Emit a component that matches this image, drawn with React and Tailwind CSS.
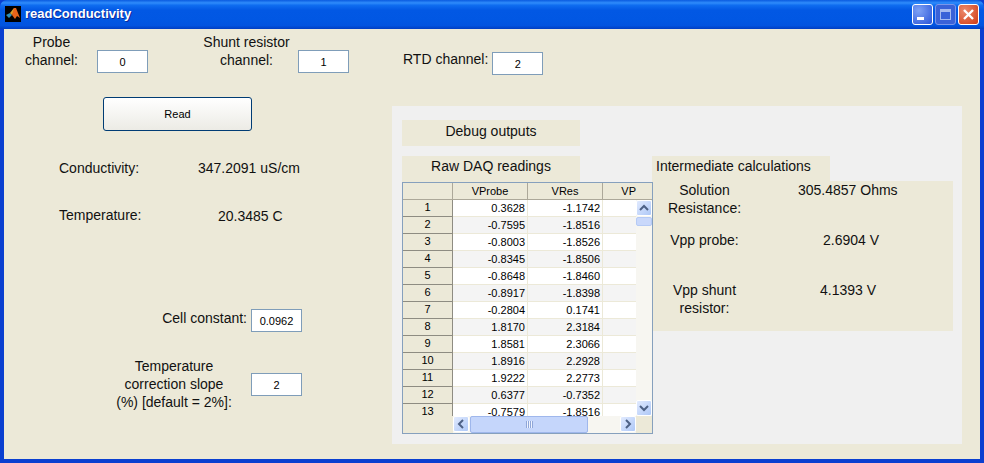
import React from "react";

const rows = [
  ["1", "0.3628", "-1.1742"],
  ["2", "-0.7595", "-1.8516"],
  ["3", "-0.8003", "-1.8526"],
  ["4", "-0.8345", "-1.8506"],
  ["5", "-0.8648", "-1.8460"],
  ["6", "-0.8917", "-1.8398"],
  ["7", "-0.2804", "0.1741"],
  ["8", "1.8170", "2.3184"],
  ["9", "1.8581", "2.3066"],
  ["10", "1.8916", "2.2928"],
  ["11", "1.9222", "2.2773"],
  ["12", "0.6377", "-0.7352"],
  ["13", "-0.7579", "-1.8516"],
];

function Edit({ value, className = "" }) {
  return (
    <div className={`w-[51px] h-[23px] shrink-0 bg-white border border-[#7f9db9] flex items-center justify-center text-[11px] text-black ${className}`}>
      {value}
    </div>
  );
}

function Chevron({ dir }) {
  const d = {
    up: "M3 9 L7 5 L11 9",
    down: "M3 5 L7 9 L11 5",
    left: "M9 3 L5 7 L9 11",
    right: "M5 3 L9 7 L5 11",
  }[dir];
  return (
    <svg width="14" height="14" viewBox="0 0 14 14" fill="none">
      <path d={d} stroke="#4d6185" strokeWidth="2" />
    </svg>
  );
}

function ScrollBtn({ dir }) {
  return (
    <div className="w-4 h-4 shrink-0 rounded-[2px] border border-white bg-gradient-to-br from-[#e1eafe] to-[#aec8f7] flex items-center justify-center">
      <Chevron dir={dir} />
    </div>
  );
}

function Table() {
  return (
    <div className="w-[251px] h-[252px] border border-[#86a0bd] bg-[#f0f0f0] flex flex-col overflow-hidden text-[11px] text-black">
      <div className="flex h-[17px] shrink-0 bg-[#ece9d8] border-b border-[#aca899]">
        <div className="w-[50px] border-r border-[#aca899]" />
        <div className="w-[75px] border-r border-[#aca899] text-center leading-[17px]">VProbe</div>
        <div className="w-[75px] border-r border-[#aca899] text-center leading-[17px]">VRes</div>
        <div className="w-[33px] text-right leading-[17px] overflow-hidden">VP</div>
      </div>
      <div className="flex h-[216px] shrink-0">
        <div className="w-[233px] overflow-hidden">
          {rows.map((r, i) => (
            <div key={r[0]} className="flex h-[17px] shrink-0">
              <div className="w-[50px] bg-[#ece9d8] border-r border-b border-[#8e8c82] text-center leading-[14px]">{r[0]}</div>
              <div className={`w-[75px] border-r border-b border-[#ece9d8] text-right pr-[2px] leading-[17px] ${i % 2 ? "bg-[#f4f4f4]" : "bg-white"}`}>{r[1]}</div>
              <div className={`w-[75px] border-r border-b border-[#ece9d8] text-right pr-[2px] leading-[17px] ${i % 2 ? "bg-[#f4f4f4]" : "bg-white"}`}>{r[2]}</div>
              <div className={`w-[33px] border-b border-[#ece9d8] ${i % 2 ? "bg-[#f4f4f4]" : "bg-white"}`} />
            </div>
          ))}
        </div>
        <div className="w-[16px] bg-[#f7f6f1] flex flex-col">
          <ScrollBtn dir="up" />
          <div className="h-[9px] mt-px rounded-[2px] border border-[#b5caf5] bg-[#c9d8fb]" />
          <div className="flex-1" />
          <ScrollBtn dir="down" />
        </div>
      </div>
      <div className="flex h-[17px] shrink-0 bg-[#ece9d8]">
        <div className="w-[50px]" />
        <div className="w-[183px] flex bg-[#f7f6f1]">
          <ScrollBtn dir="left" />
          <div className="w-[118px] ml-px rounded-[2px] border border-[#9fb7ec] bg-[#c5d6fb] flex items-center justify-center">
            <div className="w-[7px] h-[7px] bg-[repeating-linear-gradient(90deg,#8fa6d8_0,#8fa6d8_1px,#eef3ff_1px,#eef3ff_2px)]" />
          </div>
          <div className="flex-1" />
          <ScrollBtn dir="right" />
        </div>
      </div>
    </div>
  );
}

function TitleBar() {
  return (
    <div className="h-[29px] shrink-0 rounded-t-[7px] bg-[linear-gradient(180deg,#0a5be0_0%,#2f8cfb_10%,#0f6df0_18%,#0258e4_35%,#0157e3_70%,#0254e0_88%,#013ec2_100%)] flex items-center pl-[5px] pr-[5px]">
      <svg width="16" height="16" viewBox="0 0 16 16" className="shrink-0 mb-[1px]">
        <rect width="16" height="16" fill="#000" />
        <path d="M1 9 L5 7 L7 9 L4 12 Z" fill="#2f8fb8" />
        <path d="M5 7 L9 2 L11 3 L7 9 Z" fill="#d9a02c" />
        <path d="M9 2 L11 2 L15 12 L12 10 L10 13 L7 9 Z" fill="#e8641b" />
      </svg>
      <span className="ml-1 text-white text-[13px] font-bold font-['Liberation_Sans',sans-serif] [text-shadow:1px_1px_0_#0f2a9a] mb-[1px]">readConductivity</span>
      <div className="ml-auto flex gap-[2px]">
        <div className="w-[21px] h-[21px] rounded-[3px] border border-white bg-[radial-gradient(circle_at_30%_30%,#7ea2f5,#2a55d8)] flex items-end pl-[4px] pb-[4px]">
          <div className="w-[7px] h-[3px] bg-white" />
        </div>
        <div className="w-[21px] h-[21px] rounded-[3px] border border-[#7a96ea] bg-[#3a62d8] flex items-center justify-center">
          <div className="w-[11px] h-[11px] border border-[#a6baf0] border-t-[3px]" />
        </div>
        <div className="w-[21px] h-[21px] rounded-[3px] border border-white bg-[radial-gradient(circle_at_30%_30%,#ec8a6c,#cf3a14)] flex items-center justify-center">
          <svg width="13" height="13" viewBox="0 0 13 13">
            <path d="M2 2 L11 11 M11 2 L2 11" stroke="#fff" strokeWidth="2.4" />
          </svg>
        </div>
      </div>
    </div>
  );
}

export default function App() {
  return (
    <div className="w-[984px] h-[463px] overflow-hidden flex flex-col bg-[#0a3fd0] font-['Liberation_Sans',Arial,sans-serif] text-[14px] leading-[18px] text-[#111]">
      <TitleBar />
      <div className="flex-1 min-h-0 mx-[4px] mb-[4px] bg-[#ece9d8] flex flex-col">
        {/* top controls */}
        <div className="h-[68px] shrink-0 flex items-start">
          <div className="w-[93px] ml-0 mt-[4px] text-center pl-[2px]">Probe<br />channel:</div>
          <Edit value="0" className="mt-[21px]" />
          <div className="w-[95px] ml-[51px] mt-[4px] text-center">Shunt resistor<br />channel:</div>
          <Edit value="1" className="mt-[21px] ml-[4px]" />
          <div className="ml-[54px] mt-[21px]">RTD channel:</div>
          <Edit value="2" className="mt-[23px] ml-[4px]" />
        </div>

        <div className="flex-1 min-h-0 flex">
          {/* left column */}
          <div className="w-[388px] shrink-0 flex flex-col">
            <button className="ml-[99px] w-[149px] h-[34px] rounded-[3px] border border-[#003c74] bg-gradient-to-b from-[#ffffff] to-[#ecebe5] text-[11px] text-black">Read</button>
            <div className="flex mt-[28px] pl-[55px]">
              <div className="w-[87px]">Conductivity:</div>
              <div className="ml-[52px]">347.2091 uS/cm</div>
            </div>
            <div className="flex mt-[30px] pl-[55px]">
              <div className="w-[92px] -translate-y-px">Temperature:</div>
              <div className="ml-[67px]">20.3485 C</div>
            </div>
            <div className="flex justify-end items-start pr-[90px] mt-[84px]">
              <div className="mr-[4px] mt-0">Cell constant:</div>
              <Edit value="0.0962" />
            </div>
            <div className="flex items-start mt-[25px] pl-[105px]">
              <div className="w-[130px] text-center whitespace-nowrap">Temperature<br />correction slope<br />(%) [default = 2%]:</div>
              <Edit value="2" className="ml-[12px] mt-[16px]" />
            </div>
          </div>

          {/* debug panel */}
          <div className="w-[570px] h-[338px] mt-[9px] bg-[#f0f0f0] pl-[10px] pt-[14px] flex flex-col">
            <div className="w-[178px] h-[26px] bg-[#ece9d8] text-center leading-[22px]">Debug outputs</div>
            <div className="flex mt-[10px]">
              <div className="flex flex-col w-[250px]">
                <div className="w-[178px] h-[26px] bg-[#ece9d8] text-center leading-[20px]">Raw DAQ readings</div>
                <Table />
              </div>
              <div className="flex flex-col">
                <div className="w-[178px] h-[26px] bg-[#ece9d8] pl-[4px] leading-[20px] whitespace-nowrap">Intermediate calculations</div>
                <div className="w-[300px] h-[150px] ml-[1px] -mt-[1px] bg-[#ece9d8] flex flex-col">
                  <div className="flex h-[50px]">
                    <div className="w-[101px] pl-[2px] text-center">Solution<br />Resistance:</div>
                    <div className="ml-[44px]">305.4857 Ohms</div>
                  </div>
                  <div className="flex h-[50px]">
                    <div className="w-[101px] pl-[2px] text-center">Vpp probe:</div>
                    <div className="ml-[69px]">2.6904 V</div>
                  </div>
                  <div className="flex h-[50px]">
                    <div className="w-[101px] pl-[2px] text-center">Vpp shunt<br />resistor:</div>
                    <div className="ml-[66px]">4.1393 V</div>
                  </div>
                </div>
              </div>
            </div>
          </div>
        </div>
      </div>
    </div>
  );
}
